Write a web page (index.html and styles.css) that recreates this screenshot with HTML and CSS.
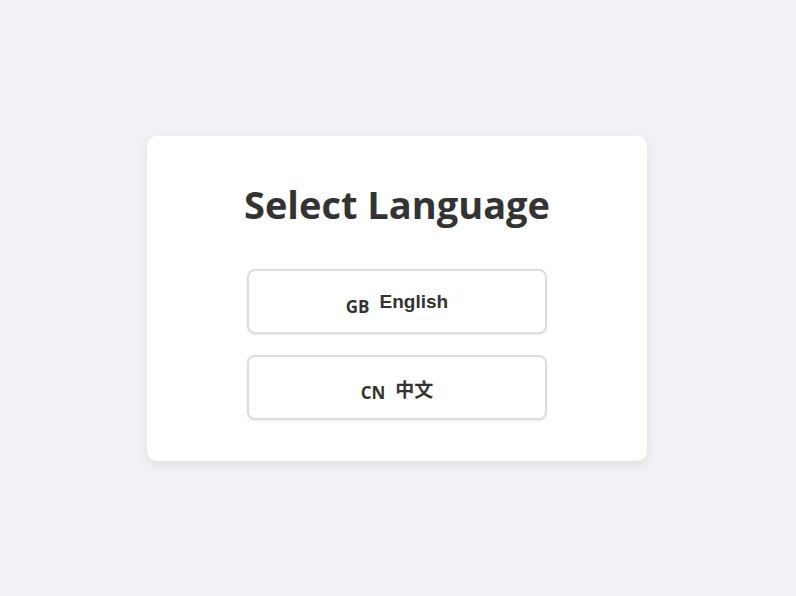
FILE: index.html
```html
<!DOCTYPE html>
<html lang="en">
<head>
<meta charset="utf-8">
<title>Select Language</title>
<link rel="stylesheet" href="styles.css">
</head>
<body>
<main class="page">
  <section class="card">
    <h1 class="title">Select Language</h1>
    <div class="options">
      <button class="lang-btn" type="button"><span class="flag">GB</span><span class="label">English</span></button>
      <button class="lang-btn" type="button"><span class="flag">CN</span><span class="label">中文</span></button>
    </div>
  </section>
</main>
</body>
</html>
```
FILE: styles.css
```css
html, body {
  margin: 0;
  padding: 0;
  height: 100%;
}
body {
  background: #f0f2f5;
  font-family: "Liberation Sans", Arial, sans-serif;
  color: #333;
}
.page {
  height: 100%;
  box-sizing: border-box;
  padding-right: 2px;
  display: flex;
  align-items: center;
  justify-content: center;
}
.card {
  width: 500px;
  box-sizing: border-box;
  padding: 40px 0 41px;
  background: #fff;
  border-radius: 10px;
  box-shadow: 0 4px 12px rgba(0, 0, 0, 0.08);
  display: flex;
  flex-direction: column;
  align-items: center;
}
.title {
  margin: 0 0 39px;
  font-family: "Open Sans", "Noto Sans", sans-serif;
  font-weight: 700;
  font-size: 38px;
  line-height: 54px;
  color: #333;
  letter-spacing: 0;
  position: relative;
  top: 1px;
}
.options {
  display: flex;
  flex-direction: column;
  gap: 21px;
}
.lang-btn {
  width: 300px;
  height: 65px;
  box-sizing: border-box;
  border: 2px solid #ddd;
  border-radius: 8px;
  background: #fff;
  box-shadow: 0 1px 3px rgba(0, 0, 0, 0.08);
  display: flex;
  align-items: center;
  justify-content: center;
  gap: 10px;
  font-family: "Liberation Sans", Arial, "Noto Sans CJK SC", sans-serif;
  font-weight: 700;
  font-size: 19px;
  color: #333;
  cursor: pointer;
  padding: 0;
}
.flag {
  font-family: "Open Sans", "Noto Sans", sans-serif;
  font-weight: 700;
  font-size: 17px;
  position: relative;
  top: 5px;
}
.label {
  position: relative;
  top: 1px;
}
```
